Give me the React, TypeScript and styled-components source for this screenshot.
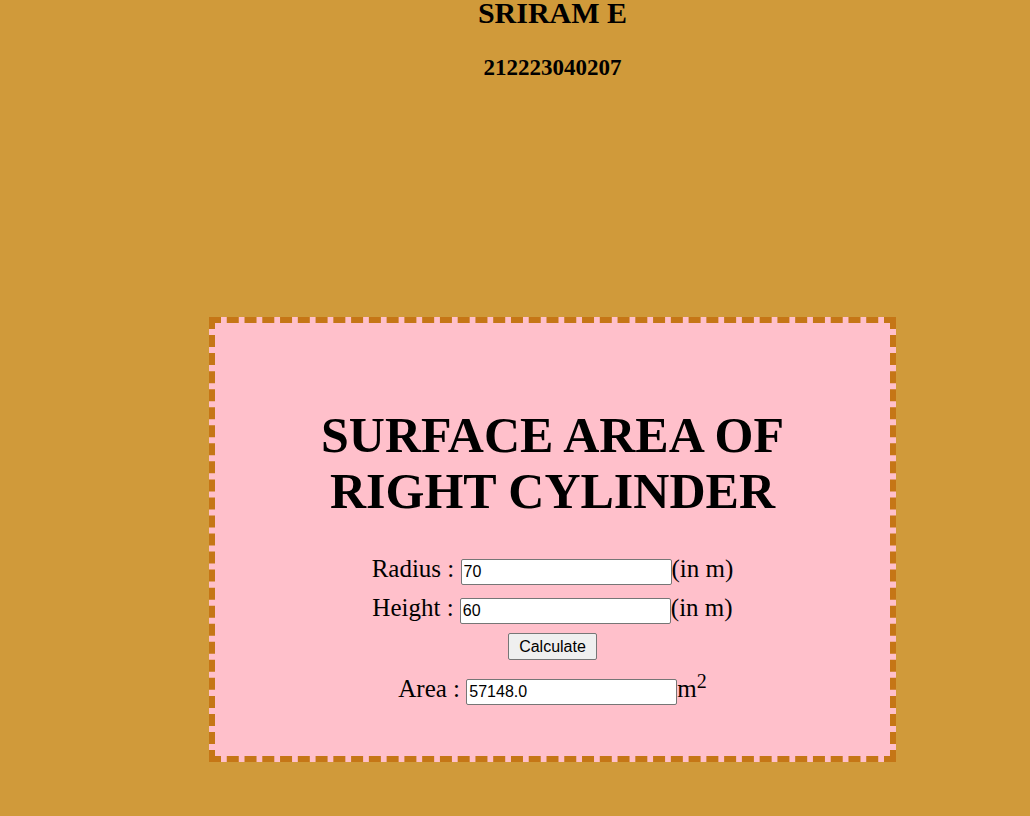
import styled, { createGlobalStyle } from 'styled-components'

const GlobalStyle = createGlobalStyle`
    body{
        margin:0;
        background:#d09a3a;
        font-family:"Liberation Serif", "Times New Roman", serif;
        color:#000;
    }
`

export default function App() {
    return (
        <>
            <GlobalStyle />
            <Page>
                <Name>SRIRAM E</Name>
                <RegNo>212223040207</RegNo>
                <Box>
                    <Title>SURFACE AREA OF<br />RIGHT CYLINDER</Title>
                    <Form>
                        <Row>
                            <Label>Radius :&nbsp;</Label>
                            <Field type='text' defaultValue='70' />
                            <Label>(in m)</Label>
                        </Row>
                        <Row>
                            <Label>Height :&nbsp;</Label>
                            <Field type='text' defaultValue='60' />
                            <Label>(in m)</Label>
                        </Row>
                        <Row>
                            <CalcButton type='button'>Calculate</CalcButton>
                        </Row>
                        <Row $top={6}>
                            <Label>Area :&nbsp;</Label>
                            <Field type='text' defaultValue='57148.0' readOnly />
                            <Label>m<sup>2</sup></Label>
                        </Row>
                    </Form>
                </Box>
            </Page>
        </>
    )
}

const Page = styled.div`
    box-sizing:border-box;
    width:1030px;
    padding-left:75px;
    display:flex;
    flex-direction:column;
    align-items:center;
    text-align:center;
`

const Name = styled.h1`
    margin:0;
    font-size:30px;
    line-height:26px;
    font-weight:700;
`

const RegNo = styled.h2`
    margin:29px 0 0 0;
    font-size:23px;
    line-height:26px;
    font-weight:700;
`

const Box = styled.div`
    box-sizing:border-box;
    width:687px;
    margin-top:236px;
    padding:84px 0 51px 0;
    background:#ffc0cb;
    border:6px dashed #c57616;
`

const Title = styled.h1`
    margin:0 0 36px 0;
    font-size:50px;
    line-height:56px;
    font-weight:700;
`

const Form = styled.div`
    display:flex;
    flex-direction:column;
    gap:9px;
`

const Row = styled.div<{ $top?: number }>`
    display:flex;
    justify-content:center;
    align-items:baseline;
    margin-top:${p => p.$top || 0}px;
    font-size:25px;
`

const Label = styled.span`
    white-space:pre;
    sup{
        font-size:20px;
        line-height:0;
    }
`

const Field = styled.input`
    box-sizing:border-box;
    width:211px;
    height:26px;
    padding:1px 2px;
    border:1px solid #767676;
    border-radius:2px;
    background:#fff;
    font-family:"Liberation Sans", Arial, sans-serif;
    font-size:16px;
    color:#000;
`

const CalcButton = styled.button`
    box-sizing:border-box;
    width:89px;
    height:27px;
    padding:1px 6px;
    border:1px solid #767676;
    border-radius:2px;
    background:#efefef;
    font-family:"Liberation Sans", Arial, sans-serif;
    font-size:16px;
    color:#000;
`
